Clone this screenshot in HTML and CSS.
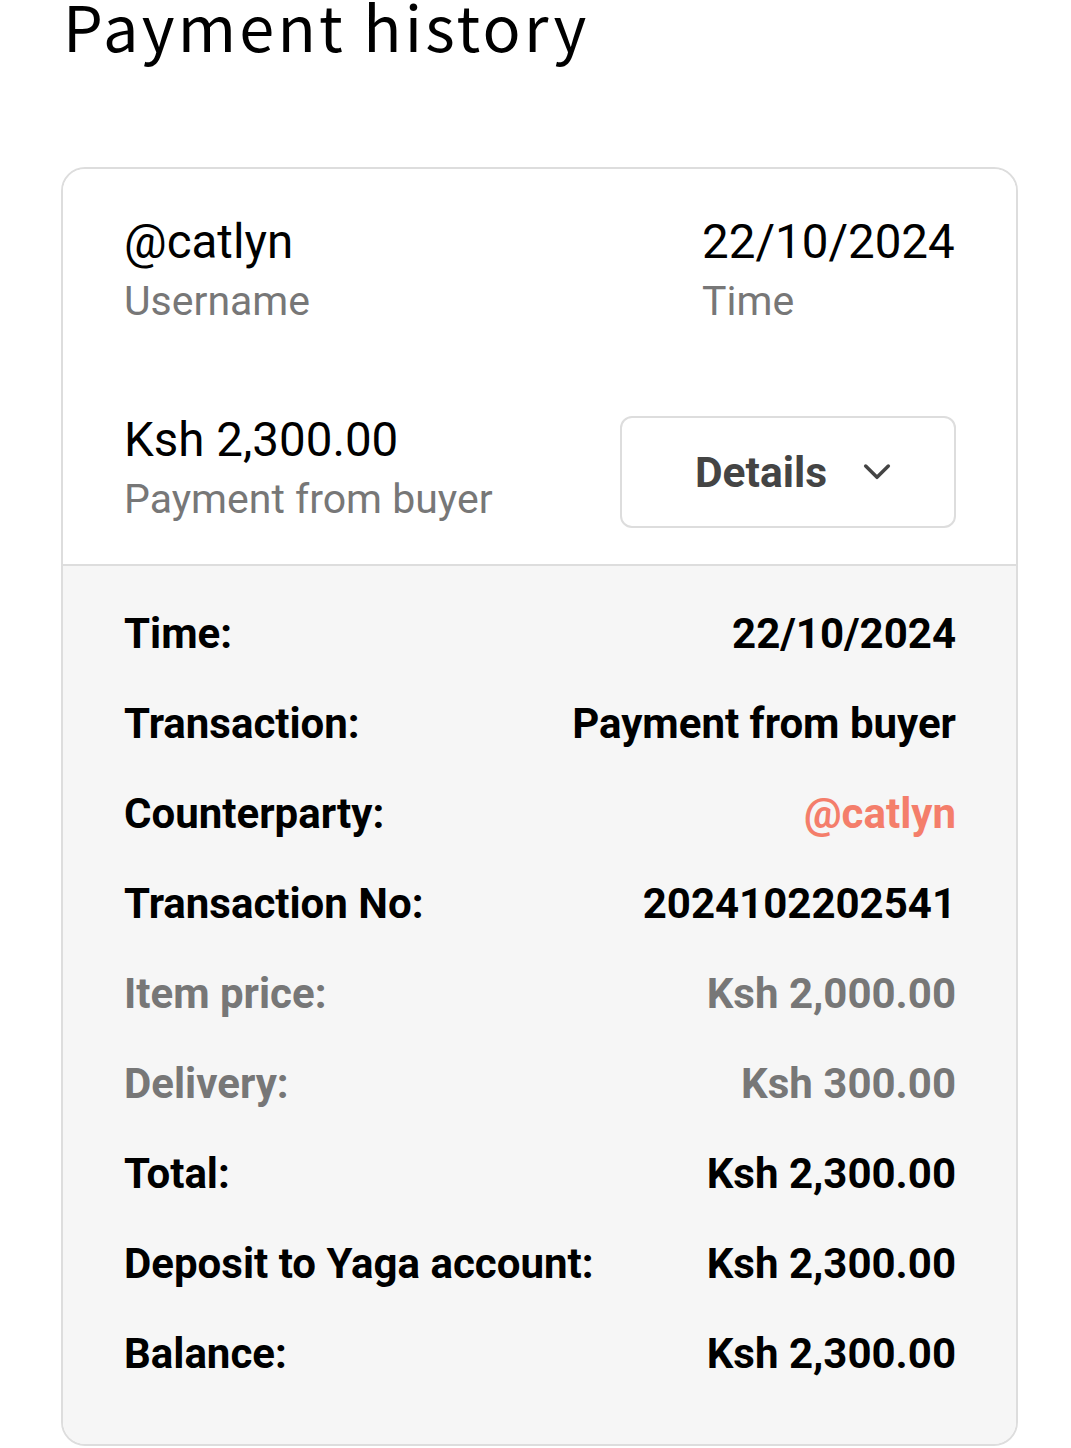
FILE: index.html
```html
<!DOCTYPE html>
<html lang="en">
<head>
	<meta charset="UTF-8">
	<title>Payment history</title>
	<link rel="stylesheet" href="styles.css">
</head>
<body>
	<h1 class="page-title">Payment history</h1>
	<div class="card">
		<div class="card-top">
			<div class="info-row">
				<div class="info">
					<p class="info-main">@catlyn</p>
					<p class="info-sub">Username</p>
				</div>
				<div class="info info-right">
					<p class="info-main">22/10/2024</p>
					<p class="info-sub">Time</p>
				</div>
			</div>
			<div class="info-row amount-row">
				<div class="info">
					<p class="info-main">Ksh 2,300.00</p>
					<p class="info-sub">Payment from buyer</p>
				</div>
				<button class="details-btn">
					<span>Details</span>
					<svg width="32" height="32" viewBox="0 0 24 24"><path d="M3.5 7.5l8.5 8.5 8.5-8.5" fill="none" stroke="#444" stroke-width="2.6" stroke-linecap="round" stroke-linejoin="round"/></svg>
				</button>
			</div>
		</div>
		<div class="card-details">
			<div class="detail"><span>Time:</span><span>22/10/2024</span></div>
			<div class="detail"><span>Transaction:</span><span>Payment from buyer</span></div>
			<div class="detail"><span>Counterparty:</span><span class="link">@catlyn</span></div>
			<div class="detail"><span>Transaction No:</span><span>2024102202541</span></div>
			<div class="detail muted"><span>Item price:</span><span>Ksh 2,000.00</span></div>
			<div class="detail muted"><span>Delivery:</span><span>Ksh 300.00</span></div>
			<div class="detail"><span>Total:</span><span>Ksh 2,300.00</span></div>
			<div class="detail"><span>Deposit to Yaga account:</span><span>Ksh 2,300.00</span></div>
			<div class="detail"><span>Balance:</span><span>Ksh 2,300.00</span></div>
		</div>
	</div>
</body>
</html>
```
FILE: styles.css
```css
body {
	margin: 0;
	background-color: #fff;
	font-family: Roboto, "Liberation Sans", sans-serif;
	color: #000;
}
p {
	margin: 0;
}
.page-title {
	margin: -20px 0 0 63px;
	font-family: "Noto Sans CJK JP", "Noto Sans", sans-serif;
	font-weight: 400;
	font-size: 63px;
	line-height: 90px;
	letter-spacing: 3.2px;
}
.card {
	width: 953px;
	margin: 97px 0 0 61px;
	border: 2px solid #ddd;
	border-radius: 24px;
	overflow: hidden;
}
.card-top {
	padding: 44px 60px 35px 61px;
	background-color: #fff;
}
.info-row {
	display: flex;
	justify-content: space-between;
	align-items: center;
}
.amount-row {
	margin-top: 80px;
}
.info-right {
	width: 254px;
}
.info-main {
	font-size: 47.5px;
	line-height: 58px;
}
.info-sub {
	font-size: 41px;
	line-height: 60px;
	color: #777;
}
.details-btn {
	display: flex;
	align-items: center;
	justify-content: center;
	gap: 34px;
	width: 336px;
	height: 112px;
	margin-top: 4px;
	padding: 0 0 0 12px;
	border: 2px solid #ddd;
	border-radius: 12px;
	background-color: #fff;
	font-family: Roboto, "Liberation Sans", sans-serif;
	font-size: 42.5px;
	font-weight: 700;
	color: #444;
}
.card-details {
	padding: 22px 60px 46px 61px;
	background-color: #f6f6f6;
	border-top: 2px solid #ddd;
}
.detail {
	display: flex;
	justify-content: space-between;
	height: 90px;
	align-items: center;
	font-size: 42px;
	font-weight: 700;
}
.detail.muted {
	color: #777;
}
.link {
	color: #f47e6b;
}
```
